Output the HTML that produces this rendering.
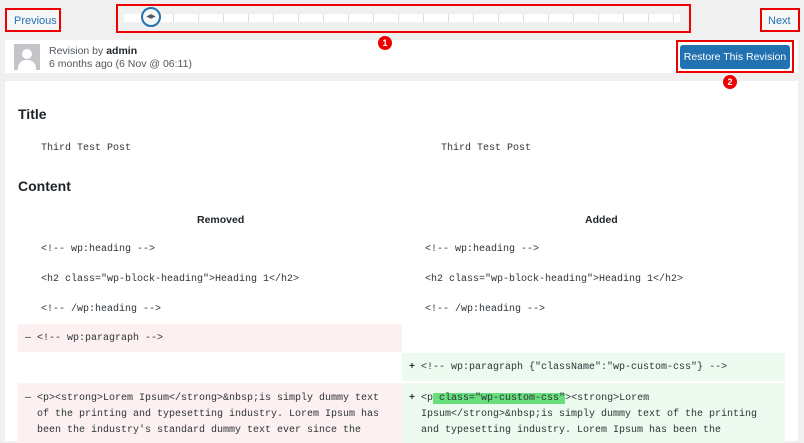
<!DOCTYPE html>
<html><head><style>
*{margin:0;padding:0;box-sizing:border-box}
body{width:804px;height:432px;background:#f0f0f1;font-family:"Liberation Sans",sans-serif;position:relative;overflow:hidden;color:#1d2327}
.a{position:absolute}
.red{border:2px solid #e00;position:absolute}
.mono{font-family:"Liberation Mono",monospace;font-size:10px;color:#2c3338;white-space:pre}
.badge{position:absolute;width:14px;height:14px;border-radius:50%;background:#e00;color:#fff;font-size:9px;text-align:center;line-height:14px;font-weight:bold;z-index:5}
</style></head><body>
<div class="red" style="left:5px;top:8px;width:56px;height:24px;background:#f6f7f7"></div>
<div class="a" style="left:14px;top:15px;font-size:11px;color:#2271b1">Previous</div>
<div class="red" style="left:116px;top:4px;width:575px;height:29px"></div>
<div class="a" style="left:124px;top:14px;width:556px;height:8px;background:#fff;background-image:repeating-linear-gradient(90deg,transparent 0 24px,#dcdcde 24px 25px)"></div>
<div class="a" style="left:141px;top:7px;width:20px;height:20px;border-radius:50%;border:2px solid #2271b1;background:#f6f7f7;font-size:6px;text-align:center;line-height:16px;color:#50575e">◀▶</div>
<div class="red" style="left:760px;top:8px;width:40px;height:24px;background:#f6f7f7"></div>
<div class="a" style="left:768px;top:15px;font-size:11px;color:#2271b1">Next</div>

<div class="a" style="left:5px;top:40px;width:793px;height:33px;background:#fff"></div>
<div class="badge" style="left:378px;top:36px">1</div>
<div class="a" style="left:14px;top:44px;width:26px;height:26px;background:#c3c4c7;overflow:hidden">
<div class="a" style="left:8px;top:5px;width:10px;height:10px;border-radius:50%;background:#fff"></div>
<div class="a" style="left:4px;top:16px;width:18px;height:14px;border-radius:8px 8px 0 0;background:#fff"></div></div>
<div class="a" style="left:49px;top:45px;font-size:10.5px;color:#50575e;line-height:13px">Revision by <b style="color:#1d2327">admin</b><br>6 months ago (6 Nov @ 06:11)</div>
<div class="red" style="left:676px;top:40px;width:118px;height:33px"></div>
<div class="a" style="left:680px;top:45px;width:110px;height:24px;background:#2271b1;border-radius:3px;color:#fff;font-size:10.5px;text-align:center;line-height:24px">Restore This Revision</div>

<div class="a" style="left:5px;top:81px;width:793px;height:360px;background:#fff"></div>
<div class="badge" style="left:723px;top:75px">2</div>
<div class="a" style="left:18px;top:106px;font-size:14px;font-weight:bold;color:#1d2327">Title</div>
<div class="a mono" style="left:41px;top:143px">Third Test Post</div>
<div class="a mono" style="left:441px;top:143px">Third Test Post</div>
<div class="a" style="left:18px;top:178px;font-size:14px;font-weight:bold">Content</div>
<div class="a" style="left:197px;top:214px;font-size:10.5px;font-weight:bold">Removed</div>
<div class="a" style="left:585px;top:214px;font-size:10.5px;font-weight:bold">Added</div>
<div class="a mono" style="left:41px;top:244px">&lt;!-- wp:heading --&gt;</div>
<div class="a mono" style="left:425px;top:244px">&lt;!-- wp:heading --&gt;</div>
<div class="a mono" style="left:41px;top:274px">&lt;h2 class="wp-block-heading"&gt;Heading 1&lt;/h2&gt;</div>
<div class="a mono" style="left:425px;top:274px">&lt;h2 class="wp-block-heading"&gt;Heading 1&lt;/h2&gt;</div>
<div class="a mono" style="left:41px;top:304px">&lt;!-- /wp:heading --&gt;</div>
<div class="a mono" style="left:425px;top:304px">&lt;!-- /wp:heading --&gt;</div>
<div class="a" style="left:18px;top:324px;width:384px;height:28px;background:#fcf0f1"></div>
<div class="a mono" style="left:25px;top:333px">— &lt;!-- wp:paragraph --&gt;</div>
<div class="a" style="left:402px;top:353px;width:383px;height:28px;background:#edfaef"></div>
<div class="a mono" style="left:409px;top:362px"><b>+</b> &lt;!-- wp:paragraph {"className":"wp-custom-css"} --&gt;</div>
<div class="a" style="left:18px;top:383px;width:384px;height:60px;background:#fcf0f1"></div>
<div class="a" style="left:402px;top:383px;width:383px;height:60px;background:#edfaef"></div>
<div class="a mono" style="left:25px;top:391px;line-height:16px">— &lt;p&gt;&lt;strong&gt;Lorem Ipsum&lt;/strong&gt;&amp;nbsp;is simply dummy text
  of the printing and typesetting industry. Lorem Ipsum has
  been the industry's standard dummy text ever since the</div>
<div class="a mono" style="left:409px;top:391px;line-height:16px"><b>+</b> &lt;p<span style="background:#68de7c"> class="wp-custom-css"</span>&gt;&lt;strong&gt;Lorem
  Ipsum&lt;/strong&gt;&amp;nbsp;is simply dummy text of the printing
  and typesetting industry. Lorem Ipsum has been the</div>
</body></html>
